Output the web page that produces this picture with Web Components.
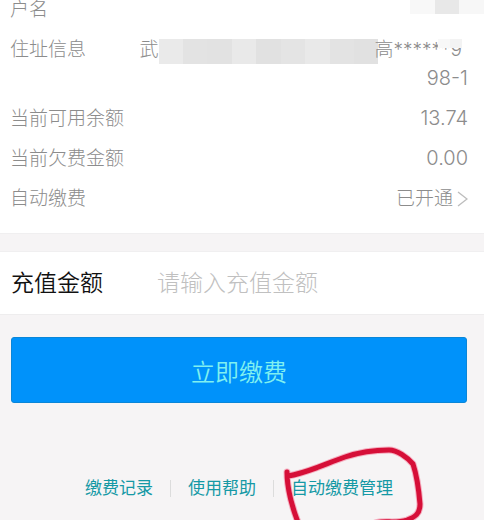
<!DOCTYPE html>
<html lang="zh-CN">
<head>
<meta charset="utf-8">
<meta name="viewport" content="width=device-width, initial-scale=1">
<title>缴费</title>
<style>
  body {
    margin: 0;
    background-color: #F6F4F5;
    font-family: Inter, "Noto Sans CJK SC", sans-serif;
    font-weight: 300;
  }
</style>
</head>
<body>
<payment-page></payment-page>
<script>
class MosaicStrip extends HTMLElement {
  constructor() {
    super();
    this.shadowDOM = this.attachShadow({ mode: 'open' });
  }

  connectedCallback() {
    this.render();
  }

  render() {
    const tones = (this.getAttribute('tones') || '').split(' ');

    this.shadowDOM.innerHTML = `
        <style>
          :host {
            display: flex;
          }

          span {
            flex: 1;
          }
        </style>

        ${tones.map((tone) => `<span style="background-color: ${tone}"></span>`).join('')}
      `;
  }
}

class InfoRow extends HTMLElement {
  constructor() {
    super();
    this.shadowDOM = this.attachShadow({ mode: 'open' });
  }

  connectedCallback() {
    this.render();
  }

  render() {
    this.shadowDOM.innerHTML = `
        <style>
          :host {
            display: flex;
            position: relative;
            justify-content: space-between;
            font-size: 19px;
            line-height: 29px;
            color: #8C8C8C;
          }

          .value {
            font-size: 20px;
            text-align: right;
          }
        </style>

        <span>${this.getAttribute('label')}</span>
        <div class="value"><slot></slot></div>
      `;
  }
}

class AmountField extends HTMLElement {
  constructor() {
    super();
    this.shadowDOM = this.attachShadow({ mode: 'open' });
  }

  connectedCallback() {
    this.render();
  }

  get value() {
    return this.shadowDOM.querySelector('#amount').value;
  }

  render() {
    this.shadowDOM.innerHTML = `
        <style>
          :host {
            display: flex;
            align-items: center;
            padding: 12px 17px 12px 11px;
            background-color: #FFFFFF;
            font-size: 23px;
            line-height: 38px;
          }

          label {
            flex: none;
            width: 146px;
            font-weight: 350;
            color: #111111;
          }

          input {
            flex: 1;
            min-width: 0;
            height: 38px;
            padding: 0;
            border: none;
            outline: none;
            background: none;
            font: inherit;
            color: #111111;
          }

          input::placeholder {
            color: #C0C0C0;
          }
        </style>

        <label for="amount">充值金额</label>
        <input id="amount" type="text" inputmode="decimal" placeholder="请输入充值金额">
      `;
  }
}

class PayButton extends HTMLElement {
  constructor() {
    super();
    this.shadowDOM = this.attachShadow({ mode: 'open' });
  }

  connectedCallback() {
    this.render();
  }

  render() {
    this.shadowDOM.innerHTML = `
        <style>
          :host {
            display: block;
          }

          button {
            display: block;
            width: 100%;
            height: 66px;
            padding: 0;
            border: 1px solid #0A86D8;
            border-radius: 3px;
            background-color: #0092FA;
            font: inherit;
            font-size: 24px;
            font-weight: 350;
            color: #80F0F0;
            cursor: pointer;
          }
        </style>

        <button type="button"><slot></slot></button>
      `;
  }
}

class FooterLinks extends HTMLElement {
  constructor() {
    super();
    this.shadowDOM = this.attachShadow({ mode: 'open' });
  }

  connectedCallback() {
    this.render();
  }

  render() {
    this.shadowDOM.innerHTML = `
        <style>
          :host {
            display: block;
          }

          nav {
            display: flex;
            justify-content: center;
            align-items: center;
            gap: 17px;
            font-size: 17px;
            font-weight: 400;
            line-height: 24px;
          }

          a {
            color: #1599A5;
            text-decoration: none;
            white-space: nowrap;
          }

          .divider {
            width: 1px;
            height: 17px;
            background-color: #DCDCDC;
          }

          .marked {
            position: relative;
          }

          /* hand-drawn ring round the last link */
          .marked svg {
            position: absolute;
            left: -8px;
            top: -32px;
            overflow: visible;
            pointer-events: none;
          }
        </style>

        <nav>
          <a href="#records">缴费记录</a>
          <span class="divider"></span>
          <a href="#help">使用帮助</a>
          <span class="divider"></span>
          <span class="marked">
            <a href="#auto">自动缴费管理</a>
            <svg width="144" height="78" viewBox="0 0 144 78" fill="none" stroke-linecap="round" stroke-linejoin="round" aria-hidden="true">
              <path stroke="#F5AFC0" stroke-width="7" d="M4 28C4 44 8 58 12 70L17 84M5 32C24 29 42 20 62 13C80 7 94 6 106 6C114 6 124 13 130 20C134 32 136 48 137 60C137 70 132 73 124 76C112 80 102 76 92 79"/>
              <path stroke="#D60F38" stroke-width="5" d="M4 28C4 44 8 58 12 70L17 84M5 32C24 29 42 20 62 13C80 7 94 6 106 6C114 6 124 13 130 20C134 32 136 48 137 60C137 70 132 73 124 76C112 80 102 76 92 79"/>
            </svg>
          </span>
        </nav>
      `;
  }
}

class PaymentPage extends HTMLElement {
  constructor() {
    super();
    this.shadowDOM = this.attachShadow({ mode: 'open' });
  }

  connectedCallback() {
    this.render();
  }

  render() {
    this.shadowDOM.innerHTML = `
        <style>
          :host {
            display: block;
            box-sizing: border-box;
            min-height: 100vh;
            overflow: hidden;
          }

          /* the list is scrolled a little past its first row */
          .info {
            display: grid;
            gap: 11px;
            margin-top: -5px;
            padding: 0 16px 20px 10px;
            border-bottom: 1px solid #F0EFF0;
            background-color: #FFFFFF;
          }

          .name-mask {
            position: absolute;
            right: -16px;
            top: 0;
            width: 74px;
            height: 19px;
          }

          .address {
            display: flex;
            justify-content: flex-end;
            position: relative;
            padding-right: 6px;
            font-size: 19px;
          }

          .address-mask {
            width: 220px;
            height: 25px;
            margin: 4px -4px 0 0;
          }

          .address b {
            position: relative;
            font-weight: inherit;
          }

          .digit-mask {
            position: absolute;
            right: 6px;
            top: 4px;
            width: 24px;
            height: 9px;
          }

          .status {
            display: flex;
            align-items: center;
            gap: 4px;
            font-size: 19px;
            color: inherit;
            text-decoration: none;
          }

          amount-field {
            margin-top: 17px;
            border-top: 1px solid #F0EFF0;
            border-bottom: 1px solid #EEEDEE;
          }

          pay-button {
            margin: 22px 17px 0 11px;
          }

          footer-links {
            margin: 73px 17px 0 11px;
            padding-bottom: 20px;
          }
        </style>

        <section class="info">
          <info-row label="户名">
            <mosaic-strip class="name-mask" tones="#F8F8F8 #E8E8E8 #F7F7F7"></mosaic-strip>
          </info-row>
          <info-row label="住址信息">
            <div class="address">
              <span>武</span>
              <mosaic-strip class="address-mask" tones="#EAEAEA #E3E3E3 #E2E2E2 #E9E9E9 #E1E1E1 #E4E4E4 #E9E9E9 #E3E3E3 #E1E1E1"></mosaic-strip>
              <b>高******9</b>
              <mosaic-strip class="digit-mask" tones="#F8F8F8 #F3F3F3"></mosaic-strip>
            </div>
            <div>98-1</div>
          </info-row>
          <info-row label="当前可用余额">13.74</info-row>
          <info-row label="当前欠费金额">0.00</info-row>
          <info-row label="自动缴费">
            <a class="status" href="#auto">
              已开通
              <svg width="11" height="18" viewBox="0 0 11 18" fill="none" stroke="#BDBDBD" stroke-width="1.4" aria-hidden="true">
                <path d="M1 2L10 9L1 16"/>
              </svg>
            </a>
          </info-row>
        </section>

        <amount-field></amount-field>
        <pay-button>立即缴费</pay-button>
        <footer-links></footer-links>
      `;
  }
}

customElements.define('mosaic-strip', MosaicStrip);
customElements.define('info-row', InfoRow);
customElements.define('amount-field', AmountField);
customElements.define('pay-button', PayButton);
customElements.define('footer-links', FooterLinks);
customElements.define('payment-page', PaymentPage);
</script>
</body>
</html>
